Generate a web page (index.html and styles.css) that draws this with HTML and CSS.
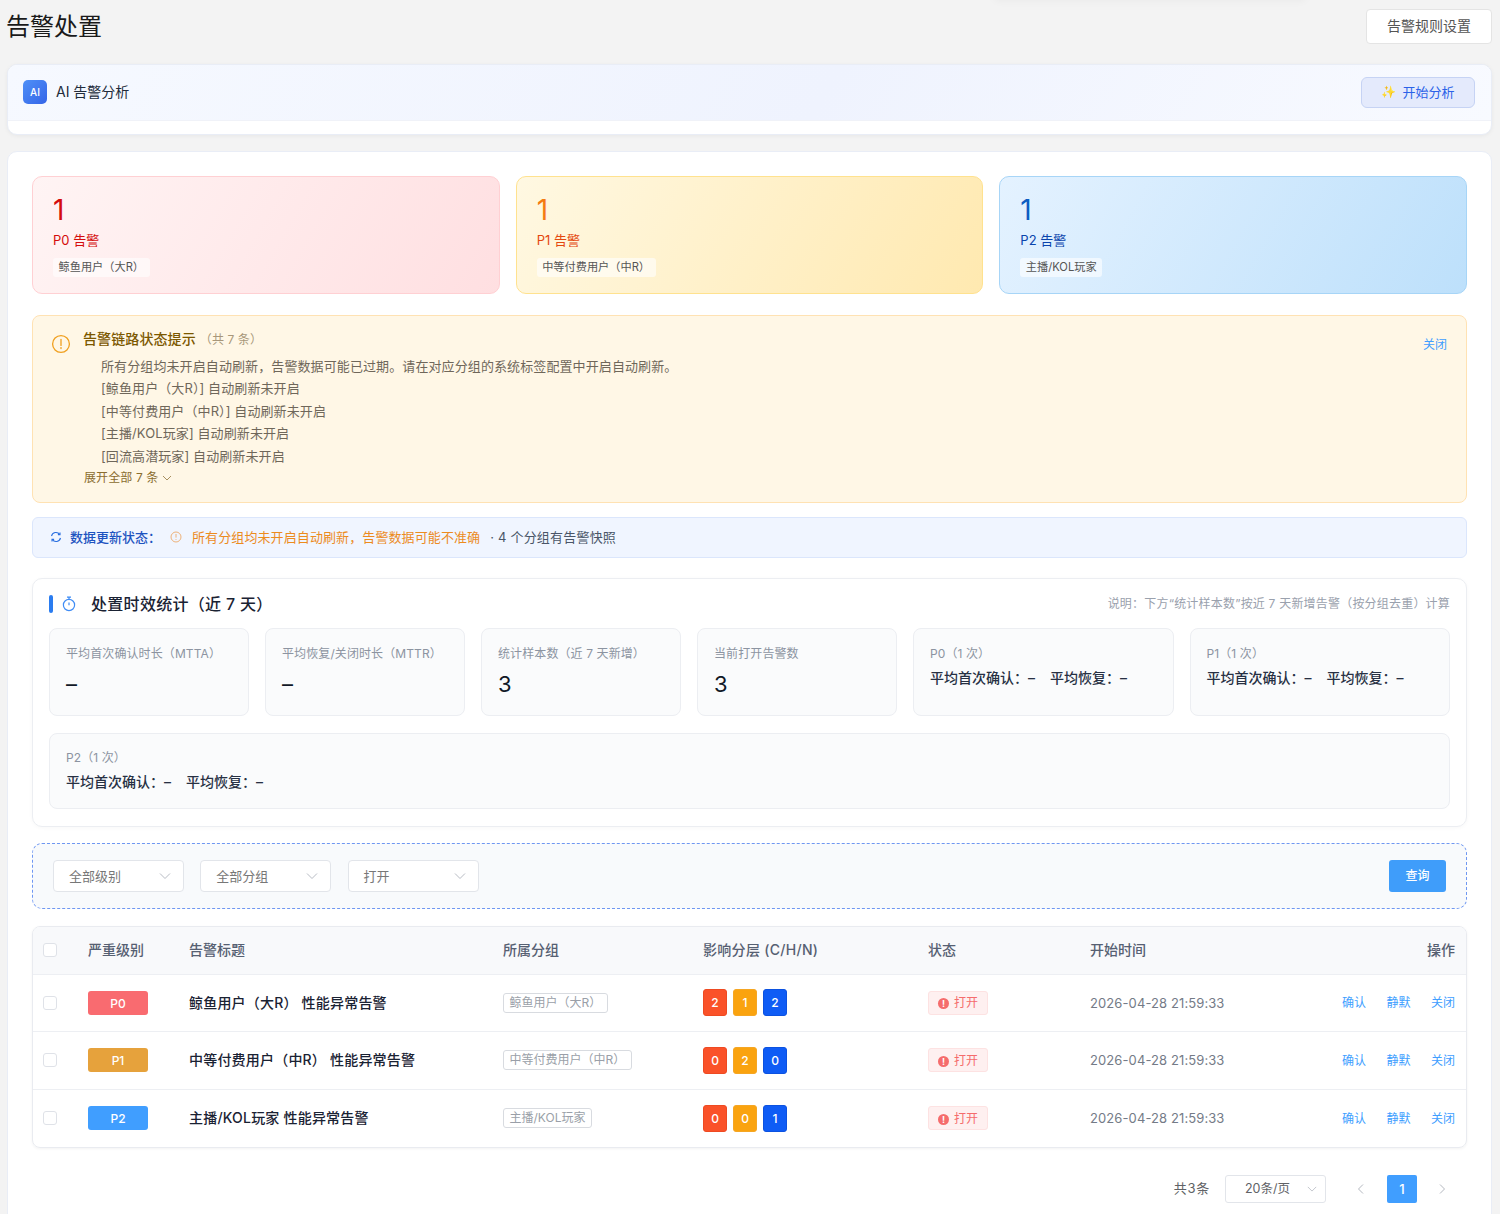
FILE: index.html
```html
<!DOCTYPE html>
<html lang="zh-CN">

<head>
    <meta charset="UTF-8">
    <title>告警处置</title>
    <link rel="stylesheet" href="styles.css">
</head>

<body>
    <div class="toast-shadow"></div>

    <div class="page-head">
        <h1>告警处置</h1>
        <button class="btn-plain">告警规则设置</button>
    </div>

    <div class="ai-card">
        <div class="ai-head">
            <div class="ai-title"><span class="ai-logo">AI</span>AI 告警分析</div>
            <button class="btn-ai"><span class="sparkle">✨</span>开始分析</button>
        </div>
    </div>

    <div class="main-card">
        <div class="level-row">
            <div class="level-card level-p0">
                <div class="level-num">1</div>
                <div class="level-name">P0 告警</div>
                <span class="level-tag">鲸鱼用户（大R）</span>
            </div>
            <div class="level-card level-p1">
                <div class="level-num">1</div>
                <div class="level-name">P1 告警</div>
                <span class="level-tag">中等付费用户（中R）</span>
            </div>
            <div class="level-card level-p2">
                <div class="level-num">1</div>
                <div class="level-name">P2 告警</div>
                <span class="level-tag">主播/KOL玩家</span>
            </div>
        </div>

        <div class="notice">
            <svg class="notice-icon" viewBox="0 0 20 20" width="20" height="20" fill="none" stroke="#f0a020" stroke-width="1.3">
                <circle cx="10" cy="10" r="8.4" />
                <path d="M10 5.4v6" stroke-linecap="round" />
                <path d="M10 13.6v1" stroke-linecap="round" />
            </svg>
            <div class="notice-body">
                <div class="notice-title"><b>告警链路状态提示</b><span>（共 7 条）</span></div>
                <div class="notice-line">所有分组均未开启自动刷新，告警数据可能已过期。请在对应分组的系统标签配置中开启自动刷新。</div>
                <div class="notice-line">[鲸鱼用户（大R）] 自动刷新未开启</div>
                <div class="notice-line">[中等付费用户（中R）] 自动刷新未开启</div>
                <div class="notice-line">[主播/KOL玩家] 自动刷新未开启</div>
                <div class="notice-line">[回流高潜玩家] 自动刷新未开启</div>
                <div class="notice-more">展开全部 7 条
                    <svg viewBox="0 0 10 10" width="10" height="10" fill="none" stroke="#a89060" stroke-width="1"><path d="M1 3l4 4 4-4" /></svg>
                </div>
            </div>
            <a class="notice-close">关闭</a>
        </div>

        <div class="update-bar">
            <svg viewBox="0 0 12 12" width="12" height="12" fill="none" stroke="#2a6fe0" stroke-width="1.1">
                <path d="M1.5 5a4.6 4.6 0 0 1 8.2-1.6" />
                <path d="M10.5 7a4.6 4.6 0 0 1-8.2 1.6" />
                <path d="M10 1.4v2.2H7.9" />
                <path d="M2 10.6V8.4h2.1" />
            </svg>
            <b>数据更新状态：</b>
            <svg class="warn-small" viewBox="0 0 12 12" width="12" height="12" fill="none" stroke="#eeb27a" stroke-width="1">
                <circle cx="6" cy="6" r="5" />
                <path d="M6 3v3.6M6 8.2v.8" />
            </svg>
            <span class="update-warn">所有分组均未开启自动刷新，告警数据可能不准确</span>
            <span class="update-extra">· 4 个分组有告警快照</span>
        </div>

        <div class="stats">
            <div class="stats-head">
                <div class="stats-title">
                    <i class="stats-bar"></i>
                    <svg viewBox="0 0 14 16" width="14" height="16" fill="none" stroke="#3f8cf5" stroke-width="1.2">
                        <circle cx="7" cy="9" r="5.6" />
                        <path d="M5 1.2h4M7 1.2v2M7 6.4v2.8" />
                    </svg>
                    处置时效统计（近 7 天）
                </div>
                <div class="stats-note">说明：下方“统计样本数”按近 7 天新增告警（按分组去重）计算</div>
            </div>
            <div class="stats-grid">
                <div class="tile">
                    <div class="tile-label">平均首次确认时长（MTTA）</div>
                    <div class="tile-value">–</div>
                </div>
                <div class="tile">
                    <div class="tile-label">平均恢复/关闭时长（MTTR）</div>
                    <div class="tile-value">–</div>
                </div>
                <div class="tile">
                    <div class="tile-label">统计样本数（近 7 天新增）</div>
                    <div class="tile-value">3</div>
                </div>
                <div class="tile">
                    <div class="tile-label">当前打开告警数</div>
                    <div class="tile-value">3</div>
                </div>
                <div class="tile">
                    <div class="tile-label">P0（1 次）</div>
                    <div class="tile-text"><span>平均首次确认：–</span><span>平均恢复：–</span></div>
                </div>
                <div class="tile">
                    <div class="tile-label">P1（1 次）</div>
                    <div class="tile-text"><span>平均首次确认：–</span><span>平均恢复：–</span></div>
                </div>
                <div class="tile tile-wide">
                    <div class="tile-label">P2（1 次）</div>
                    <div class="tile-text"><span>平均首次确认：–</span><span>平均恢复：–</span></div>
                </div>
            </div>
        </div>

        <div class="filters">
            <div class="select"><span>全部级别</span><svg viewBox="0 0 12 12" width="12" height="12" fill="none" stroke="#b8bcc4"><path d="M1 3.5l5 5 5-5" /></svg></div>
            <div class="select"><span>全部分组</span><svg viewBox="0 0 12 12" width="12" height="12" fill="none" stroke="#b8bcc4"><path d="M1 3.5l5 5 5-5" /></svg></div>
            <div class="select"><span>打开</span><svg viewBox="0 0 12 12" width="12" height="12" fill="none" stroke="#b8bcc4"><path d="M1 3.5l5 5 5-5" /></svg></div>
            <button class="btn-query">查询</button>
        </div>

        <div class="table-wrap">
            <table>
                <thead>
                    <tr>
                        <th class="col-check"><span class="check"></span></th>
                        <th class="col-level">严重级别</th>
                        <th class="col-title">告警标题</th>
                        <th class="col-group">所属分组</th>
                        <th class="col-impact">影响分层 (C/H/N)</th>
                        <th class="col-status">状态</th>
                        <th class="col-time">开始时间</th>
                        <th class="col-ops">操作</th>
                    </tr>
                </thead>
                <tbody>
                    <tr>
                        <td><span class="check"></span></td>
                        <td><span class="badge badge-p0">P0</span></td>
                        <td class="alert-title">鲸鱼用户（大R） 性能异常告警</td>
                        <td><span class="group-tag">鲸鱼用户（大R）</span></td>
                        <td><div class="counts"><span class="c">2</span><span class="h">1</span><span class="n">2</span></div></td>
                        <td><span class="status"><i>!</i>打开</span></td>
                        <td class="time">2026-04-28 21:59:33</td>
                        <td><div class="ops"><a>确认</a><a>静默</a><a>关闭</a></div></td>
                    </tr>
                    <tr>
                        <td><span class="check"></span></td>
                        <td><span class="badge badge-p1">P1</span></td>
                        <td class="alert-title">中等付费用户（中R） 性能异常告警</td>
                        <td><span class="group-tag">中等付费用户（中R）</span></td>
                        <td><div class="counts"><span class="c">0</span><span class="h">2</span><span class="n">0</span></div></td>
                        <td><span class="status"><i>!</i>打开</span></td>
                        <td class="time">2026-04-28 21:59:33</td>
                        <td><div class="ops"><a>确认</a><a>静默</a><a>关闭</a></div></td>
                    </tr>
                    <tr>
                        <td><span class="check"></span></td>
                        <td><span class="badge badge-p2">P2</span></td>
                        <td class="alert-title">主播/KOL玩家 性能异常告警</td>
                        <td><span class="group-tag">主播/KOL玩家</span></td>
                        <td><div class="counts"><span class="c">0</span><span class="h">0</span><span class="n">1</span></div></td>
                        <td><span class="status"><i>!</i>打开</span></td>
                        <td class="time">2026-04-28 21:59:33</td>
                        <td><div class="ops"><a>确认</a><a>静默</a><a>关闭</a></div></td>
                    </tr>
                </tbody>
            </table>
        </div>

        <div class="pager">
            <span class="pager-total">共3条</span>
            <div class="pager-size"><span>20条/页</span><svg viewBox="0 0 12 12" width="10" height="10" fill="none" stroke="#b8bcc4"><path d="M1 3.5l5 5 5-5" /></svg></div>
            <svg class="pager-prev" viewBox="0 0 10 12" width="10" height="12" fill="none" stroke="#b4b8c0"><path d="M7 1.5L2.5 6 7 10.5" /></svg>
            <span class="pager-page">1</span>
            <svg class="pager-next" viewBox="0 0 10 12" width="10" height="12" fill="none" stroke="#b4b8c0"><path d="M3 1.5L7.5 6 3 10.5" /></svg>
        </div>
    </div>
</body>

</html>
```

FILE: styles.css
```css
* {
    box-sizing: border-box;
}

html,
body {
    height: 1214px;
    overflow: hidden;
}

body {
    margin: 0;
    padding: 9px 8px 0 7px;
    font-family: Inter, "Noto Sans CJK SC", sans-serif;
    font-size: 13px;
    line-height: 1.4;
    color: #1f2937;
    background-color: #f3f3f3;
}

button {
    font-family: inherit;
    line-height: 1.4;
    cursor: pointer;
}

/* edge of a toast that sits above the top of the page */
.toast-shadow {
    position: absolute;
    top: -30px;
    left: 995px;
    width: 310px;
    height: 30px;
    box-shadow: 0 0 10px rgba(0, 0, 0, 0.05);
}

.page-head {
    display: flex;
    justify-content: space-between;
    align-items: center;
    height: 35px;
    margin-bottom: 20px;
}

h1 {
    margin: 0 0 0 -1px;
    font-size: 24px;
    font-weight: 400;
    color: #1a1a1a;
    line-height: 35px;
}

.btn-plain {
    width: 126px;
    height: 35px;
    padding: 0 0 2px;
    font-size: 14px;
    color: #555;
    background-color: #fff;
    border: 1px solid #e4e4e4;
    border-radius: 4px;
}

.ai-card {
    height: 71px;
    margin-bottom: 16px;
    background-color: #fff;
    border: 1px solid #e9edf6;
    border-radius: 10px;
    box-shadow: 0 1px 4px rgba(0, 0, 0, 0.05);
    overflow: hidden;
}

.ai-head {
    display: flex;
    justify-content: space-between;
    align-items: center;
    height: 56px;
    padding: 0 16px 1px 15px;
    background: linear-gradient(120deg, #f6f9ff, #eff3fe 55%, #f8faff);
    border-bottom: 1px solid #f0f2f8;
}

.ai-title {
    display: flex;
    align-items: center;
    gap: 9px;
    font-size: 14px;
    color: #222b3a;
}

.ai-logo {
    display: flex;
    align-items: center;
    justify-content: center;
    width: 24px;
    height: 24px;
    font-size: 10px;
    font-weight: 500;
    color: #fff;
    background: linear-gradient(135deg, #4f90f7, #3565e8);
    border-radius: 5px;
}

.btn-ai {
    display: flex;
    align-items: center;
    justify-content: center;
    gap: 6px;
    width: 114px;
    height: 31px;
    padding: 0;
    font-size: 13px;
    color: #2b62e8;
    background-color: #e4eafc;
    border: 1px solid #c6d3f4;
    border-radius: 6px;
}

.sparkle {
    font-size: 12px;
    color: #f6cf52;
}

.main-card {
    height: 1100px;
    padding: 24px;
    background-color: #fff;
    border: 1px solid #e9edf6;
    border-radius: 10px;
}

.level-row {
    display: grid;
    grid-template-columns: repeat(3, 1fr);
    gap: 16px;
    margin-bottom: 21px;
}

.level-card {
    height: 118px;
    padding: 16px 20px 0;
    border: 1px solid;
    border-radius: 10px;
}

.level-num {
    font-size: 28px;
    line-height: 34px;
}

.level-name {
    margin-top: 3px;
    font-size: 13px;
    line-height: 20px;
}

.level-tag {
    display: inline-block;
    margin-top: 8px;
    padding: 0 5.5px;
    font-size: 11.2px;
    line-height: 19px;
    color: #555;
    background-color: rgba(255, 255, 255, 0.6);
    border-radius: 3px;
}

.level-p0 {
    background: linear-gradient(120deg, #fff4f4, #ffdfe1);
    border-color: #ffd0d3;
}

.level-p0 .level-num,
.level-p0 .level-name {
    color: #d40c0c;
}

.level-p1 {
    background: linear-gradient(120deg, #fff8e2, #ffe9b0);
    border-color: #ffe28f;
}

.level-p1 .level-num {
    color: #f47b12;
}

.level-p1 .level-name {
    color: #e4480e;
}

.level-p2 {
    background: linear-gradient(120deg, #e4f2ff, #bde0fb);
    border-color: #a7d5f7;
}

.level-p2 .level-num {
    color: #0b5cc2;
}

.level-p2 .level-name {
    color: #0a44ac;
}

.notice {
    display: flex;
    height: 188px;
    margin-bottom: 14px;
    padding: 13px 19px 0 18px;
    background-color: #fff7e6;
    border: 1px solid #ffe2b3;
    border-radius: 8px;
}

.notice-icon {
    flex: none;
    margin: 5px 13px 0 0;
}

.notice-body {
    flex: 1;
    font-size: 13px;
    letter-spacing: 0.1px;
    color: #6f675a;
}

.notice-title {
    margin-left: -1px;
    line-height: 20px;
}

.notice-title b {
    font-size: 14px;
    font-weight: 500;
    color: #7c5800;
}

.notice-title span {
    margin-left: 4px;
    font-size: 12px;
    color: #a8977a;
}

.notice-line {
    height: 22.4px;
    padding-left: 17px;
    line-height: 22.4px;
}

.notice-title + .notice-line {
    margin-top: 5px;
}

.notice-more {
    display: flex;
    align-items: center;
    gap: 4px;
    font-size: 12px;
    line-height: 22px;
    color: #8a6d2f;
}

.notice-close {
    margin-top: 8px;
    font-size: 12px;
    color: #409eff;
}

.update-bar {
    display: flex;
    align-items: center;
    height: 41px;
    margin-bottom: 20px;
    padding: 0 0 1px 17px;
    background-color: #f0f5ff;
    border: 1px solid #dbe6fc;
    border-radius: 6px;
    font-size: 13px;
}

.update-bar b {
    margin-left: 8px;
    font-weight: 500;
    color: #1d53c0;
}

.warn-small {
    margin: 0 10px 0 9px;
}

.update-warn {
    letter-spacing: 0.1px;
    color: #ec8b1e;
}

.update-extra {
    margin-left: 10px;
    letter-spacing: 0.2px;
    color: #4a5568;
}

.stats {
    height: 249px;
    margin-bottom: 16px;
    padding: 0 16px;
    border: 1px solid #eceef2;
    border-radius: 10px;
    box-shadow: 0 1px 4px rgba(0, 0, 0, 0.03);
}

.stats-head {
    display: flex;
    justify-content: space-between;
    align-items: center;
    height: 49px;
    padding-top: 2px;
}

.stats-title {
    display: flex;
    align-items: center;
    font-size: 16px;
    font-weight: 500;
    letter-spacing: 0.3px;
    color: #1a2233;
}

.stats-title svg {
    margin: 0 15px 0 9px;
}

.stats-bar {
    width: 4px;
    height: 18px;
    background-color: #2a7cf0;
    border-radius: 2px;
}

.stats-note {
    font-size: 12px;
    letter-spacing: 0.2px;
    color: #9aa1ad;
}

.stats-grid {
    display: grid;
    grid-template-columns: 200px 200px 200px 200px 1fr 1fr;
    gap: 17px 16px;
}

.tile {
    height: 88px;
    padding: 16px 16px 0;
    background-color: #fafbfc;
    border: 1px solid #eceef2;
    border-radius: 8px;
}

.tile-wide {
    grid-column: 1 / -1;
    height: 76px;
    padding-top: 15px;
}

.tile-label {
    font-size: 12px;
    line-height: 18px;
    letter-spacing: 0.1px;
    color: #8c94a1;
}

.tile-value {
    margin-top: 7px;
    font-size: 22px;
    line-height: 28px;
    color: #111827;
}

.tile-text {
    display: flex;
    gap: 15px;
    margin-top: 5px;
    font-size: 14px;
    font-weight: 500;
    line-height: 20px;
    color: #273043;
}

.filters {
    display: flex;
    align-items: center;
    gap: 16.3px;
    height: 66px;
    margin-bottom: 17px;
    padding: 0 20px;
    background-color: #f8fafc;
    border: 1px dashed #6f97f2;
    border-radius: 10px;
}

.select {
    display: flex;
    justify-content: space-between;
    align-items: center;
    width: 131px;
    height: 32px;
    padding: 0 12px 0 15px;
    font-size: 13px;
    color: #777;
    background-color: #fff;
    border: 1px solid #e2e5ea;
    border-radius: 4px;
}

.btn-query {
    width: 57px;
    height: 32px;
    margin-left: auto;
    padding: 0;
    font-size: 12px;
    font-weight: 500;
    color: #fff;
    background-color: #3f9dfa;
    border: none;
    border-radius: 3px;
}

.table-wrap {
    border: 1px solid #e9ebf0;
    border-radius: 8px;
    box-shadow: 0 1px 3px rgba(0, 0, 0, 0.05);
    overflow: hidden;
}

table {
    width: 100%;
    border-collapse: collapse;
    table-layout: fixed;
}

th {
    height: 47px;
    padding: 0 0 1px;
    font-size: 14px;
    font-weight: 500;
    text-align: left;
    color: #566072;
    background-color: #f8f9fb;
    border-bottom: 1px solid #edeff3;
}

td {
    height: 57.5px;
    padding: 0;
    font-size: 13px;
    border-bottom: 1px solid #edeff3;
}

tr:last-child td {
    border-bottom: none;
}

.col-check {
    width: 55px;
}

.col-level {
    width: 101px;
}

.col-title {
    width: 314px;
}

.col-group {
    width: 200px;
}

.col-impact {
    width: 225px;
    letter-spacing: 0.3px;
}

.col-status {
    width: 162px;
}

.col-time {
    width: 220px;
}

.col-ops {
    padding-right: 11px;
    text-align: right;
}

.check {
    display: block;
    width: 14px;
    height: 14px;
    margin-left: 10px;
    background-color: #fff;
    border: 1px solid #dfe2e8;
    border-radius: 3px;
}

.badge {
    display: block;
    width: 60px;
    height: 24px;
    font-size: 12px;
    font-weight: 500;
    line-height: 25px;
    text-align: center;
    color: #fff;
    border-radius: 3px;
}

.badge-p0 {
    background-color: #f96b70;
}

.badge-p1 {
    background-color: #e6a23c;
}

.badge-p2 {
    background-color: #409eff;
}

.alert-title {
    font-size: 14px;
    font-weight: 500;
    letter-spacing: 0.2px;
    color: #1a2233;
}

.group-tag {
    display: block;
    width: fit-content;
    padding: 0 5.5px;
    font-size: 12px;
    line-height: 18px;
    color: #9a9fa8;
    border: 1px solid #d8dbe0;
    border-radius: 3px;
}

.counts {
    display: flex;
    gap: 6px;
}

.counts span {
    width: 24px;
    height: 27px;
    font-size: 12px;
    font-weight: 500;
    line-height: 25px;
    text-align: center;
    color: #fff;
    border: 1px solid;
    border-radius: 3px;
}

.counts .c {
    background-color: #fa5229;
    border-color: #ee4a22;
}

.counts .h {
    background-color: #faa30f;
    border-color: #f5a623;
}

.counts .n {
    background-color: #0f5cf5;
    border-color: #0c52e0;
}

.status {
    display: flex;
    width: fit-content;
    align-items: center;
    gap: 5px;
    height: 24px;
    padding: 2px 9px 0;
    font-size: 12px;
    color: #f56c6c;
    background-color: #fef0f0;
    border: 1px solid #fde2e2;
    border-radius: 3px;
}

.status i {
    width: 11px;
    height: 11px;
    font-size: 9px;
    font-style: normal;
    font-weight: 700;
    line-height: 11px;
    text-align: center;
    color: #fff;
    background-color: #f56c6c;
    border-radius: 50%;
}

.time {
    font-size: 13px;
    letter-spacing: 0.1px;
    color: #747b87;
}

.ops {
    display: flex;
    justify-content: flex-end;
    gap: 20.5px;
    padding: 2px 11px 0 0;
    font-size: 12px;
    color: #409eff;
}

.pager {
    display: flex;
    justify-content: flex-end;
    align-items: center;
    height: 28px;
    margin-top: 27px;
    font-size: 13px;
    color: #606266;
}

.pager-total {
    letter-spacing: 0.7px;
}

.pager-size {
    display: flex;
    justify-content: space-between;
    align-items: center;
    width: 101px;
    height: 28px;
    margin-left: 15px;
    padding: 0 8px 0 19px;
    font-size: 12.5px;
    border: 1px solid #e2e5ea;
    border-radius: 3px;
}

.pager-prev {
    margin: 0 21px 0 30px;
}

.pager-next {
    margin: 0 20px;
}

.pager-page {
    width: 30px;
    height: 28px;
    font-weight: 500;
    line-height: 28px;
    text-align: center;
    color: #fff;
    background-color: #409eff;
    border-radius: 2px;
}
```
